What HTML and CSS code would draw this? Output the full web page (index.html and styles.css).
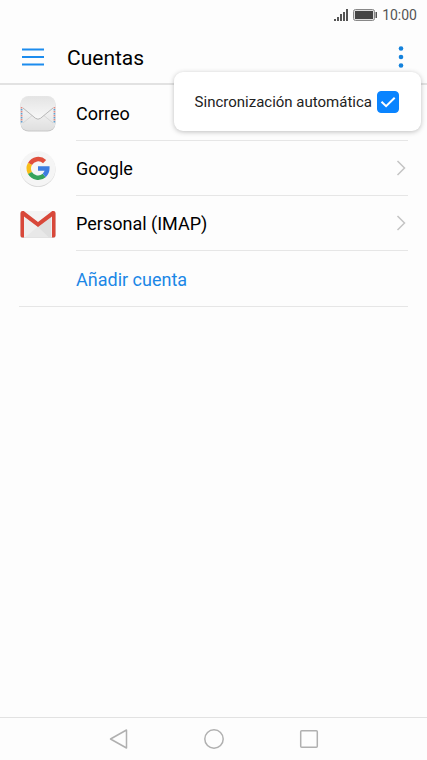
FILE: index.html
```html
<!DOCTYPE html>
<html lang="es">
<head>
  <meta charset="UTF-8">
  <meta name="viewport" content="width=device-width, initial-scale=1">
  <title>Cuentas</title>
  <link rel="stylesheet" href="styles.css">
</head>
<body>
  <!-- Barra de estado -->
  <div class="status-bar">
    <svg width="14" height="12" viewBox="0 0 14 12" fill="#555">
      <rect x="0" y="10" width="2" height="2"/>
      <rect x="3" y="8" width="2" height="4"/>
      <rect x="6" y="5" width="2" height="7"/>
      <rect x="9" y="3" width="2" height="9"/>
      <rect x="12" y="0" width="2" height="12"/>
    </svg>
    <svg width="24" height="12" viewBox="0 0 24 12">
      <rect x="0.5" y="0.5" width="21" height="11" rx="2" fill="#ddd" stroke="#888"/>
      <rect x="2" y="2" width="18" height="8" fill="#444"/>
      <rect x="22.5" y="3" width="1.5" height="6" fill="#555"/>
    </svg>
    <span class="clock">10:00</span>
  </div>

  <!-- Cabecera -->
  <header class="header">
    <button class="icon-button" type="button" aria-label="Menú">
      <svg width="22" height="18" viewBox="0 0 22 18" stroke="#1c8cee" stroke-width="1.8">
        <path d="M0 1.500h22M0 9h22M0 16.500h22"/>
      </svg>
    </button>
    <h1 class="title">Cuentas</h1>
    <button class="icon-button" type="button" aria-label="Más opciones">
      <svg width="6" height="24" viewBox="0 0 6 24" fill="#1482dc">
        <circle cx="3" cy="3.500" r="2.300"/>
        <circle cx="3" cy="12" r="2.300"/>
        <circle cx="3" cy="20.500" r="2.300"/>
      </svg>
    </button>
    <!-- Menú desplegado -->
    <div class="popup">
      <label class="popup-text" for="autoSync">Sincronización automática</label>
      <span class="check">
        <input class="check-input" id="autoSync" type="checkbox" checked>
        <svg class="check-mark" width="22" height="22" viewBox="0 0 22 22" fill="none" stroke="#fff" stroke-width="2">
          <path d="M4.500 10.700l4.600 4.500 8.600-8.400"/>
        </svg>
      </span>
    </div>
  </header>

  <!-- Lista de cuentas -->
  <main class="accounts">
    <a class="account" href="#correo">
      <svg class="account-icon" width="36" height="36" viewBox="0 0 36 36">
        <defs>
          <linearGradient id="mailBody" x1="0" y1="0" x2="0" y2="1">
            <stop offset="0" stop-color="#e6e6e6"/>
            <stop offset="0.5" stop-color="#f0f0f0"/>
            <stop offset="1" stop-color="#dfdfdf"/>
          </linearGradient>
          <linearGradient id="mailFlap" x1="0" y1="0" x2="0" y2="1">
            <stop offset="0" stop-color="#e4e4e4"/>
            <stop offset="1" stop-color="#f8f8f8"/>
          </linearGradient>
        </defs>
        <rect x="0.5" y="1" width="35" height="34.5" rx="8" fill="#c8c8c8"/>
        <rect x="0.5" y="0" width="35" height="34.5" rx="8" fill="url(#mailBody)"/>
        <path d="M3 27l11-9M33 27l-11-9" stroke="#d2d2d2" stroke-width="0.8"/>
        <path d="M1 11V8a8 8 0 0 1 8-7.500h18A8 8 0 0 1 35 8v3L20.500 22q-2.500 1.800-5 0z" fill="url(#mailFlap)"/>
        <path d="M3 12l12.500 10.300q2.500 1.800 5 0L33 12" fill="none" stroke="#b8b8b8"/>
        <path d="M1.600 11v16M34.400 11v16" stroke="#e08a85" stroke-width="1.600" stroke-dasharray="1.500 2.500"/>
        <path d="M1.600 13v14M34.400 13v14" stroke="#5f9fd0" stroke-width="1.600" stroke-dasharray="1.500 2.500"/>
      </svg>
      <span class="account-row"><span class="account-name">Correo</span></span>
    </a>
    <a class="account" href="#google">
      <svg class="account-icon" width="36" height="36" viewBox="0 0 36 36">
        <circle cx="18" cy="18.500" r="17.500" fill="#d6d6d6"/>
        <circle cx="18" cy="17.700" r="17.500" fill="#f5f5f5"/>
        <g fill="none" stroke-width="4.500">
          <path d="M24.600 10.700A9.300 9.300 0 0 0 10 13" stroke="#e04f3d"/>
          <path d="M10 12.900a9.300 9.300 0 0 0 0 9.200" stroke="#f8bd18"/>
          <path d="M10 22a9.300 9.300 0 0 0 14.200 2.500" stroke="#34a35a"/>
          <path d="M24.200 24.500a9.300 9.300 0 0 0 3.100-6.900H18" stroke="#3d7de0"/>
        </g>
      </svg>
      <span class="account-row">
        <span class="account-name">Google</span>
        <svg width="10" height="16" viewBox="0 0 10 16" fill="none" stroke="#c4c4c4" stroke-width="1.500">
          <path d="M1.500 1l7 7-7 7"/>
        </svg>
      </span>
    </a>
    <a class="account" href="#personal">
      <svg class="account-icon" width="36" height="36" viewBox="0 0 36 36">
        <rect x="0.500" y="6" width="35" height="26" rx="2" fill="#c9c9c9"/>
        <rect x="0.500" y="5" width="35" height="26.500" rx="2" fill="#efefef"/>
        <path d="M5 31.500l13-11 13 11z" fill="#e8e8e8"/>
        <path d="M18 21l13-10v20.500H29z" fill="#dfdfdf"/>
        <path d="M3 5h30L18 16.500z" fill="#f4f4f4"/>
        <path d="M4 31.500H2.500a2 2 0 0 1-2-2V7a2 2 0 0 1 2-2h1.200L18 16 32.300 5h1.200a2 2 0 0 1 2 2v22.500a2 2 0 0 1-2 2H32V10.500L18 21 4 10.500z" fill="#d8483a"/>
      </svg>
      <span class="account-row">
        <span class="account-name">Personal (IMAP)</span>
        <svg width="10" height="16" viewBox="0 0 10 16" fill="none" stroke="#c4c4c4" stroke-width="1.500">
          <path d="M1.500 1l7 7-7 7"/>
        </svg>
      </span>
    </a>
    <button class="add-account" type="button">Añadir cuenta</button>
  </main>

  <!-- Barra de navegación -->
  <nav class="nav-bar">
    <button class="icon-button" type="button" aria-label="Atrás">
      <svg width="20" height="20" viewBox="0 0 20 20" fill="none" stroke="#b0b0b0" stroke-width="1.500" stroke-linejoin="round">
        <path d="M17.500 1v18L1.500 10z"/>
      </svg>
    </button>
    <button class="icon-button" type="button" aria-label="Inicio">
      <svg width="20" height="20" viewBox="0 0 20 20" fill="none" stroke="#b0b0b0" stroke-width="1.500">
        <circle cx="10" cy="10" r="9.200"/>
      </svg>
    </button>
    <button class="icon-button" type="button" aria-label="Recientes">
      <svg width="20" height="20" viewBox="0 0 20 20" fill="none" stroke="#b0b0b0" stroke-width="1.500">
        <rect x="1.700" y="1.700" width="16.600" height="16.600" rx="1"/>
      </svg>
    </button>
  </nav>
</body>
</html>
```

FILE: styles.css
```css
/* Estilos básicos */
* {
  box-sizing: border-box;
}
body {
  margin: 0;
  min-height: 100vh;
  display: flex;
  flex-direction: column;
  background-color: #fdfdfd;
  color: #000;
  font-family: Roboto, "Liberation Sans", sans-serif;
  font-size: 18px;
}
svg {
  display: block;
  flex: none;
}
button {
  font: inherit;
}
.icon-button {
  padding: 0;
  border: none;
  background: none;
  cursor: pointer;
}
/* Barra de estado */
.status-bar {
  display: flex;
  align-items: center;
  justify-content: flex-end;
  gap: 5px;
  height: 29px;
  padding: 0 10px;
}
.clock {
  color: #555;
  font-size: 14px;
}
/* Cabecera */
.header {
  position: relative;
  display: flex;
  align-items: center;
  height: 56px;
  padding: 2px 23px 0 22px;
  border-bottom: 2px solid #e2e2e2;
}
.title {
  flex: 1;
  margin: 0;
  padding: 2px 0 0 23px;
  font-size: 21px;
  font-weight: 400;
}
/* Menú desplegado */
.popup {
  position: absolute;
  top: 43px;
  right: 6px;
  z-index: 1;
  display: flex;
  align-items: center;
  gap: 5px;
  height: 59px;
  padding: 0 22px 0 21px;
  border-radius: 9px;
  background-color: #fff;
  box-shadow: 0 1px 5px rgba(0, 0, 0, 0.25);
}
.popup-text {
  color: #222;
  font-size: 15px;
  white-space: nowrap;
}
.check {
  position: relative;
}
.check-input {
  display: block;
  width: 22px;
  height: 22px;
  margin: 0;
  border-radius: 4px;
  appearance: none;
  background-color: #fff;
  border: 1px solid #999;
}
.check-input:checked {
  background-color: #0a84ff;
  border-color: #0a84ff;
}
.check-mark {
  position: absolute;
  top: 0;
  left: 0;
  pointer-events: none;
}
/* Lista de cuentas */
.accounts {
  flex: 1;
  padding: 1px 19px 0;
}
.account {
  display: flex;
  align-items: center;
  gap: 20px;
  padding-left: 1px;
  color: inherit;
  text-decoration: none;
}
.account-row {
  flex: 1;
  display: flex;
  align-items: center;
  justify-content: space-between;
  height: 55px;
  padding-right: 2px;
  border-bottom: 1px solid #e6e6e6;
}
.add-account {
  display: block;
  width: 100%;
  height: 56px;
  padding: 2px 0 0 57px;
  border: none;
  border-bottom: 1px solid #e6e6e6;
  background: none;
  color: #1b87e6;
  text-align: left;
  cursor: pointer;
}
/* Barra de navegación */
.nav-bar {
  display: flex;
  align-items: center;
  justify-content: center;
  gap: 75px;
  height: 43px;
  border-top: 1px solid #e2e2e2;
}
```
